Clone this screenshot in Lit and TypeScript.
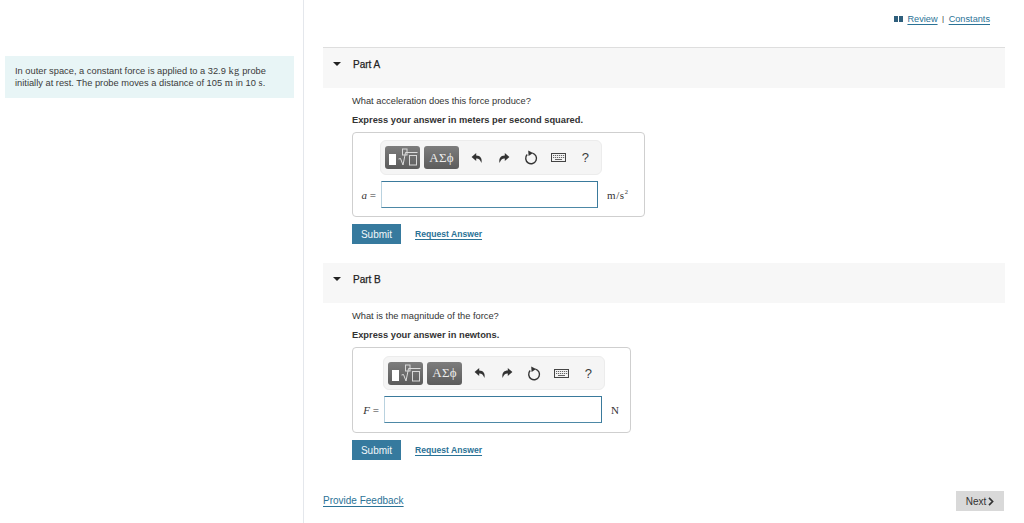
import { LitElement, css, html, svg } from "lit";
import { customElement, property } from "lit/decorators.js";

const undoPath = "M5.2 1 L.6 5 L5.2 9 V6.6 C7.6 6.4 9.2 7.6 10.4 11 C11.4 6.6 9.6 3.4 5.2 3.4 Z";

@customElement("math-toolbar")
class MathToolbar extends LitElement {
  static styles = css`
    :host {
      display: flex;
      align-items: center;
      box-sizing: border-box;
      height: var(--bar-h, 35px);
      padding: 0 4px;
      background: #f5f5f5;
      border: 1px solid #ececec;
      border-radius: 6px;
    }
    .btn {
      flex: none;
      display: flex;
      align-items: center;
      justify-content: center;
      box-sizing: border-box;
      width: 35px;
      height: 23px;
      margin-right: 4px;
      border-radius: 3px;
      background: linear-gradient(#7d7d7d, #5c5c5c);
      color: #ececec;
      font: 13px "Liberation Serif", "DejaVu Serif", serif;
      letter-spacing: 0.2px;
    }
    .tool {
      flex: none;
      display: flex;
      align-items: center;
      justify-content: center;
      width: 27.2px;
      height: 23px;
      color: #3c3c3c;
      font: 13px "Liberation Sans", Arial, sans-serif;
    }
    .tools {
      display: flex;
    }
  `;

  render() {
    return html`
      <div class="btn">
        <svg width="31" height="19" viewBox="0 0 31 19">
          <rect x="2" y="6" width="7" height="11" fill="#fff" />
          <rect x="15.5" y="1" width="4.5" height="6" fill="none" stroke="#d8d8d8" />
          <path d="M11.5 11 L13.5 10.5 L16 17 L18.5 4.5 H30.5" fill="none" stroke="#dcdcdc" />
          <rect x="22.5" y="7.5" width="7" height="9.5" fill="none" stroke="#d8d8d8" />
        </svg>
      </div>
      <div class="btn">ΑΣϕ</div>
      <div class="tools">
        <div class="tool">
          <svg width="12" height="12" viewBox="0 0 12 12"><path d=${undoPath} fill="#333" /></svg>
        </div>
        <div class="tool">
          <svg width="12" height="12" viewBox="0 0 12 12">
            <path d=${undoPath} fill="#333" transform="translate(12 0) scale(-1 1)" />
          </svg>
        </div>
        <div class="tool">
          <svg width="14" height="15" viewBox="0 0 14 15">
            <path d="M8.4 3.1 A5.4 5.4 0 1 1 3.2 4.6" fill="none" stroke="#333" stroke-width="1.4" />
            <path d="M4.2 .6 L9 3.1 L4.6 6 Z" fill="#333" />
          </svg>
        </div>
        <div class="tool">
          <svg width="15" height="9" viewBox="0 0 15 9">
            <rect x=".5" y=".5" width="14" height="8" fill="#f4f4f4" stroke="#444" />
            ${[2, 4, 6, 8, 10, 12].map(
              (x) => svg`<path d="M${x} 2.5 h1.2 M${x} 4.5 h1.2" stroke="#666" />`
            )}
            <path d="M4 6.5 h7" stroke="#666" />
          </svg>
        </div>
        <div class="tool">?</div>
      </div>
    `;
  }
}

@customElement("answer-box")
class AnswerBox extends LitElement {
  @property() variable = "";
  @property() unit = "";

  static styles = css`
    :host {
      display: block;
      box-sizing: border-box;
      border: 1px solid #cfcfcf;
      border-radius: 4px;
      padding: var(--pad-top, 7px) 0 var(--pad-bottom, 8px);
    }
    .grid {
      display: grid;
      grid-template-columns: var(--label-w) var(--input-w) auto;
      row-gap: 6px;
    }
    math-toolbar {
      grid-column: 2;
      width: 222px;
      margin-left: -1px;
    }
    .label {
      grid-column: 1;
      align-self: center;
      text-align: right;
      padding-right: 5px;
      font: italic 11px "Liberation Serif", serif;
      color: #333;
    }
    .label span {
      font-style: normal;
    }
    .field {
      box-sizing: border-box;
      height: 27px;
      background: #fff;
      border: 1px solid #3a7a9c;
      border-left-color: #b9d2df;
      border-bottom-color: #4d88a6;
    }
    .unit {
      align-self: center;
      padding-left: 9px;
      font: 11px "Liberation Serif", serif;
      color: #333;
      letter-spacing: 0.6px;
    }
    sup {
      font-size: 6.5px;
      line-height: 0;
    }
  `;

  render() {
    return html`
      <div class="grid">
        <math-toolbar></math-toolbar>
        <div class="label">${this.variable} <span>=</span></div>
        <div class="field"></div>
        <div class="unit">
          ${this.unit === "m/s2" ? html`m/s<sup>2</sup>` : this.unit}
        </div>
      </div>
    `;
  }
}

@customElement("part-section")
class PartSection extends LitElement {
  @property() title = "";
  @property() question = "";
  @property() hint = "";

  static styles = css`
    :host {
      display: block;
      font: 9.3px "Liberation Sans", Arial, sans-serif;
      color: #333;
    }
    .head {
      display: flex;
      align-items: center;
      height: 40px;
      padding: 0 0 8px 10px;
      box-sizing: border-box;
      background: #f7f7f7;
      font-size: 10px;
      color: #222;
      -webkit-text-stroke: 0.25px #222;
    }
    .caret {
      width: 0;
      height: 0;
      margin-right: 12px;
      border-left: 4px solid transparent;
      border-right: 4px solid transparent;
      border-top: 4px solid #222;
    }
    .body {
      padding: 7px 0 0 29px;
    }
    p {
      margin: 0;
      line-height: 12px;
    }
    .hint {
      margin-top: 7px;
      font-weight: 700;
    }
    slot {
      display: block;
      margin-top: 6px;
    }
    .actions {
      display: flex;
      align-items: center;
      gap: 14px;
      margin-top: 7px;
    }
    .submit {
      display: flex;
      align-items: center;
      justify-content: center;
      width: 49px;
      height: 20px;
      background: #367a9e;
      color: #f2f7fa;
      font-size: 10px;
    }
    a {
      color: #2a7296;
      font-size: 8.6px;
      font-weight: 700;
      text-decoration: underline;
      text-underline-offset: 2px;
    }
  `;

  render() {
    return html`
      <div class="head"><span class="caret"></span>${this.title}</div>
      <div class="body">
        <p>${this.question}</p>
        <p class="hint">${this.hint}</p>
        <slot></slot>
        <div class="actions">
          <div class="submit">Submit</div>
          <a>Request Answer</a>
        </div>
      </div>
    `;
  }
}

@customElement("app-root")
export class AppRoot extends LitElement {
  static styles = css`
    :host {
      display: flex;
      height: 523px;
      overflow: hidden;
      background: #fff;
      font: 9.2px "Liberation Sans", Arial, sans-serif;
      color: #333;
    }
    .left {
      box-sizing: border-box;
      flex: 0 0 304px;
      padding: 56px 9px 0 5px;
      border-right: 1px solid #e4e7ec;
    }
    .callout {
      box-sizing: border-box;
      height: 42px;
      padding: 9px 10px;
      background: #e8f5f6;
      font-size: 9.3px;
      line-height: 12px;
      color: #3b3b3b;
    }
    .line {
      height: 12px;
      white-space: nowrap;
    }
    .callout span {
      font: 10.5px/10px "Liberation Serif", serif;
      letter-spacing: 0.3px;
    }
    .right {
      flex: 1;
      display: flex;
      flex-direction: column;
      padding: 0 19px;
      min-width: 0;
    }
    .top {
      display: flex;
      justify-content: flex-end;
      align-items: center;
      gap: 5px;
      height: 48px;
      padding: 0 15px 10px 0;
      box-sizing: border-box;
      border-bottom: 1px solid #dedede;
    }
    a {
      color: #2a7296;
      text-decoration: underline;
      text-underline-offset: 2px;
    }
    .book {
      display: flex;
      gap: 1px;
      margin-right: -1px;
    }
    .book span {
      width: 4px;
      height: 6px;
      background: #2f5f7c;
    }
    .sep {
      margin: 0 -0.5px;
      font-size: 8px;
    }
    .box-a {
      --label-w: 28px;
      --input-w: 217px;
      width: 293px;
    }
    .box-b {
      --label-w: 31px;
      --input-w: 218px;
      --pad-top: 8px;
      --pad-bottom: 9px;
      --bar-h: 34px;
      width: 279px;
    }
    .part-b {
      margin-top: 19px;
    }
    .bottom {
      display: flex;
      align-items: center;
      justify-content: space-between;
      margin-top: 31px;
      padding-right: 1px;
    }
    .feedback {
      margin-bottom: 2px;
      font-size: 10px;
    }
    .next {
      display: flex;
      align-items: center;
      justify-content: center;
      gap: 2px;
      width: 48px;
      height: 20px;
      background: #d9d9d9;
      color: #333;
      font-size: 10px;
    }
  `;

  render() {
    return html`
      <div class="left">
        <div class="callout">
          <div class="line">In outer space, a constant force is applied to a 32.9 <span>kg</span> probe</div>
          <div class="line">initially at rest. The probe moves a distance of 105 <span>m</span> in 10 <span>s</span>.</div>
        </div>
      </div>
      <div class="right">
        <div class="top">
          <span class="book"><span></span><span></span></span>
          <a>Review</a><span class="sep">|</span><a>Constants</a>
        </div>
        <part-section
          title="Part A"
          question="What acceleration does this force produce?"
          hint="Express your answer in meters per second squared."
        >
          <answer-box class="box-a" variable="a" unit="m/s2"></answer-box>
        </part-section>
        <part-section
          class="part-b"
          title="Part B"
          question="What is the magnitude of the force?"
          hint="Express your answer in newtons."
        >
          <answer-box class="box-b" variable="F" unit="N"></answer-box>
        </part-section>
        <div class="bottom">
          <a class="feedback">Provide Feedback</a>
          <div class="next">
            Next
            <svg width="6" height="9" viewBox="0 0 6 9">
              <path d="M1 .8 L4.6 4.5 L1 8.2" fill="none" stroke="#333" stroke-width="1.7" />
            </svg>
          </div>
        </div>
      </div>
    `;
  }
}
